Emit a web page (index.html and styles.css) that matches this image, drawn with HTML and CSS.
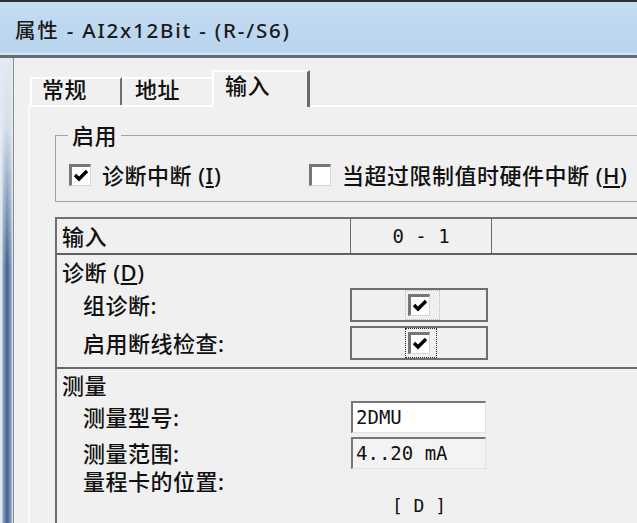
FILE: index.html
```html
<!DOCTYPE html>
<html lang="zh-CN">
<head>
<meta charset="utf-8">
<title>属性 - AI2x12Bit - (R-/S6)</title>
<link rel="stylesheet" href="styles.css">
</head>
<body>
<div class="window">
  <div class="titlebar">属性 - AI2x12Bit - (R-/S6)</div>
  <div class="frame">
    <div class="frame-left"></div>
    <div class="client">
      <div class="tabs">
        <div class="tab tab-first">常规</div>
        <div class="tab tab-second">地址</div>
        <div class="tab tab-active">输入</div>
      </div>
      <div class="page">
        <fieldset class="group">
          <legend>启用</legend>
          <div class="checks">
            <label class="check check-first">
              <span class="cb"><svg viewBox="0 0 18 18" width="18" height="18"><path d="M3 8 L7 12 L15 4" fill="none" stroke="#000" stroke-width="3.4"/></svg></span>
              <span class="check-text">诊断中断 (<u>I</u>)</span>
            </label>
            <label class="check">
              <span class="cb"></span>
              <span class="check-text">当超过限制值时硬件中断 (<u>H</u>)</span>
            </label>
          </div>
        </fieldset>

        <div class="table">
          <div class="thead">
            <div class="th th-label">输入</div>
            <div class="th th-value">0 - 1</div>
            <div class="th"></div>
          </div>

          <div class="section">
            <div class="sec-title">诊断 (<u>D</u>)</div>
            <div class="row">
              <div class="row-label">组诊断:</div>
              <div class="cbox">
                <span class="focus focus-light"><span class="cb"><svg viewBox="0 0 18 18" width="18" height="18"><path d="M3 8 L7 12 L15 4" fill="none" stroke="#000" stroke-width="3.4"/></svg></span></span>
              </div>
            </div>
            <div class="row">
              <div class="row-label">启用断线检查:</div>
              <div class="cbox">
                <span class="focus focus-dark"><span class="cb"><svg viewBox="0 0 18 18" width="18" height="18"><path d="M3 8 L7 12 L15 4" fill="none" stroke="#000" stroke-width="3.4"/></svg></span></span>
              </div>
            </div>
          </div>

          <div class="section section-last">
            <div class="sec-title sec-title-2">测量</div>
            <div class="row row-input">
              <div class="row-label">测量型号:</div>
              <div class="input">2DMU</div>
            </div>
            <div class="row row-input">
              <div class="row-label">测量范围:</div>
              <div class="input input-disabled">4..20 mA</div>
            </div>
            <div class="row row-text">
              <div class="row-label">量程卡的位置:</div>
              <div></div>
            </div>
            <div class="row row-pos">
              <div></div>
              <div class="pos">[ D ]</div>
            </div>
          </div>
        </div>
      </div>
    </div>
  </div>
</div>
</body>
</html>
```
FILE: styles.css
```css
* { box-sizing: border-box; }
html, body { margin: 0; padding: 0; }
body {
  width: 637px;
  height: 523px;
  overflow: hidden;
  background: #f0f0f0;
  font-family: "Noto Sans", "Noto Sans CJK SC", sans-serif;
  color: #111;
}
.window {
  width: 637px;
  height: 523px;
  overflow: hidden;
  display: flex;
  flex-direction: column;
}
.titlebar {
  flex: none;
  height: 58px;
  border-top: 2px solid #2d3035;
  border-bottom: 3px solid #646c75;
  background: linear-gradient(#c5dcf2, #b9d4ee 92%, #d9e8f6);
  padding-left: 15px;
  display: flex;
  align-items: center;
  font-size: 20.5px;
  font-weight: 500;
  letter-spacing: 1.8px;
  color: #1a1a1a;
}
.frame {
  flex: 1;
  display: flex;
  min-height: 0;
}
.frame-left {
  flex: none;
  width: 13px;
  background:
    linear-gradient(to bottom, #e4eaf1 0, rgba(228,234,241,0.9) 15%, rgba(228,234,241,0) 45%),
    linear-gradient(to right, #dfe6ee 0, #dfe6ee 2px, #8ca8c8 3px, #3f5f8a 7px, #7d9bc0 11px, #cfd9e4 12px);
}
.client {
  flex: 1;
  min-width: 0;
  overflow: hidden;
  border-left: 1px solid #8d8d8d;
  padding: 12px 0 0 14px;
  display: flex;
  flex-direction: column;
}
.tabs {
  display: flex;
  align-items: flex-end;
  height: 35px;
  padding-left: 2px;
  position: relative;
  z-index: 1;
}
.tab {
  height: 28px;
  border-top: 2px solid #fff;
  font-size: 22px;
  font-weight: 500;
  line-height: 20px;
  letter-spacing: 0.5px;
  color: #111;
}
.tab-first {
  width: 92px;
  border-left: 2px solid #fff;
  border-right: 2px solid #6e6e6e;
  padding-left: 10px;
}
.tab-second {
  width: 90px;
  padding-left: 13px;
}
.tab-active {
  width: 98px;
  height: 37px;
  margin-bottom: -2px;
  border-left: 2px solid #fff;
  border-right: 3px solid #6b6b6b;
  background: #f0f0f0;
  padding-left: 11px;
  line-height: 26px;
}
.page {
  flex: 1;
  margin-right: -40px;
  border-top: 2px solid #fff;
  border-left: 2px solid #fbfbfb;
  padding: 17px 0 0 25px;
}
.group {
  margin: 0;
  min-width: 0;
  border: 1px solid #a3a3a3;
  padding: 0 0 15px 12px;
}
.group legend {
  padding: 0 4px;
  font-size: 22px;
  font-weight: 500;
  line-height: 22px;
  letter-spacing: 0.5px;
}
.checks {
  display: flex;
  align-items: center;
  height: 22px;
  margin-top: 18px;
  margin-left: 1px;
}
.check {
  display: flex;
  align-items: center;
  font-size: 22px;
  font-weight: 500;
  letter-spacing: 0.5px;
}
.check-first { width: 240px; }
.check-text { margin-left: 11px; line-height: 22px; }
.cb {
  flex: none;
  width: 22px;
  height: 22px;
  background: #fff;
  border-top: 3px solid #767676;
  border-left: 3px solid #767676;
  border-right: 1px solid #d6d6d6;
  border-bottom: 1px solid #d6d6d6;
  display: flex;
}
.cb svg { display: block; }
.table {
  margin-top: 15px;
  border-left: 2px solid #6d6d6d;
  border-top: 2px solid #707070;
  font-size: 22px;
  font-weight: 500;
  letter-spacing: 0.5px;
}
.thead {
  display: grid;
  grid-template-columns: 293px 142px 1fr;
  height: 36px;
  border-bottom: 2px solid #5f5f5f;
}
.th { line-height: 34px; }
.th-label { padding-left: 5px; }
.th-value {
  border-left: 1px solid #6a6a6a;
  border-right: 1px solid #6a6a6a;
  text-align: center;
  font-family: "DejaVu Sans Mono", monospace;
  font-size: 19px;
  font-weight: normal;
  letter-spacing: 0;
  white-space: pre;
}
.section {
  border-bottom: 2px solid #6a6a6a;
  padding-bottom: 7px;
}
.section-last { border-bottom: none; }
.sec-title {
  height: 33px;
  padding: 2px 0 0 5px;
  line-height: 31px;
}
.sec-title-2 {
  height: 32px;
  padding-top: 1px;
  line-height: 30px;
}
.row {
  display: grid;
  grid-template-columns: 293px 138px;
  align-items: center;
  height: 34px;
}
.row + .row { margin-top: 4px; }
.row-label { padding-left: 26px; line-height: 24px; }
.cbox {
  height: 34px;
  border: 2px solid #6f6f6f;
  display: flex;
  align-items: center;
  padding-left: 53px;
}
.focus {
  display: flex;
  align-items: center;
  height: 30px;
  padding-left: 2px;
}
.focus-light { width: 35px; border: 1px dotted #bdbdbd; }
.focus-dark { width: 32px; border: 1px dotted #222; }
.row-input { height: 32px; }
.input {
  margin-left: 1px;
  width: 135px;
  height: 32px;
  border-top: 2px solid #767676;
  border-left: 2px solid #767676;
  border-right: 1px solid #e2e2e2;
  border-bottom: 1px solid #e2e2e2;
  background: #fff;
  padding-left: 3px;
  font-family: "DejaVu Sans Mono", monospace;
  font-size: 19px;
  font-weight: normal;
  letter-spacing: 0;
  line-height: 29px;
  white-space: pre;
  color: #111;
}
.input-disabled { background: #f3f3f3; }
.row-text { height: 24px; margin-top: 0 !important; }
.row-pos { height: 26px; margin-top: 0 !important; }
.pos {
  text-align: center;
  font-family: "DejaVu Sans Mono", monospace;
  font-size: 18px;
  font-weight: normal;
  letter-spacing: 0;
  white-space: pre;
  line-height: 26px;
}
```
